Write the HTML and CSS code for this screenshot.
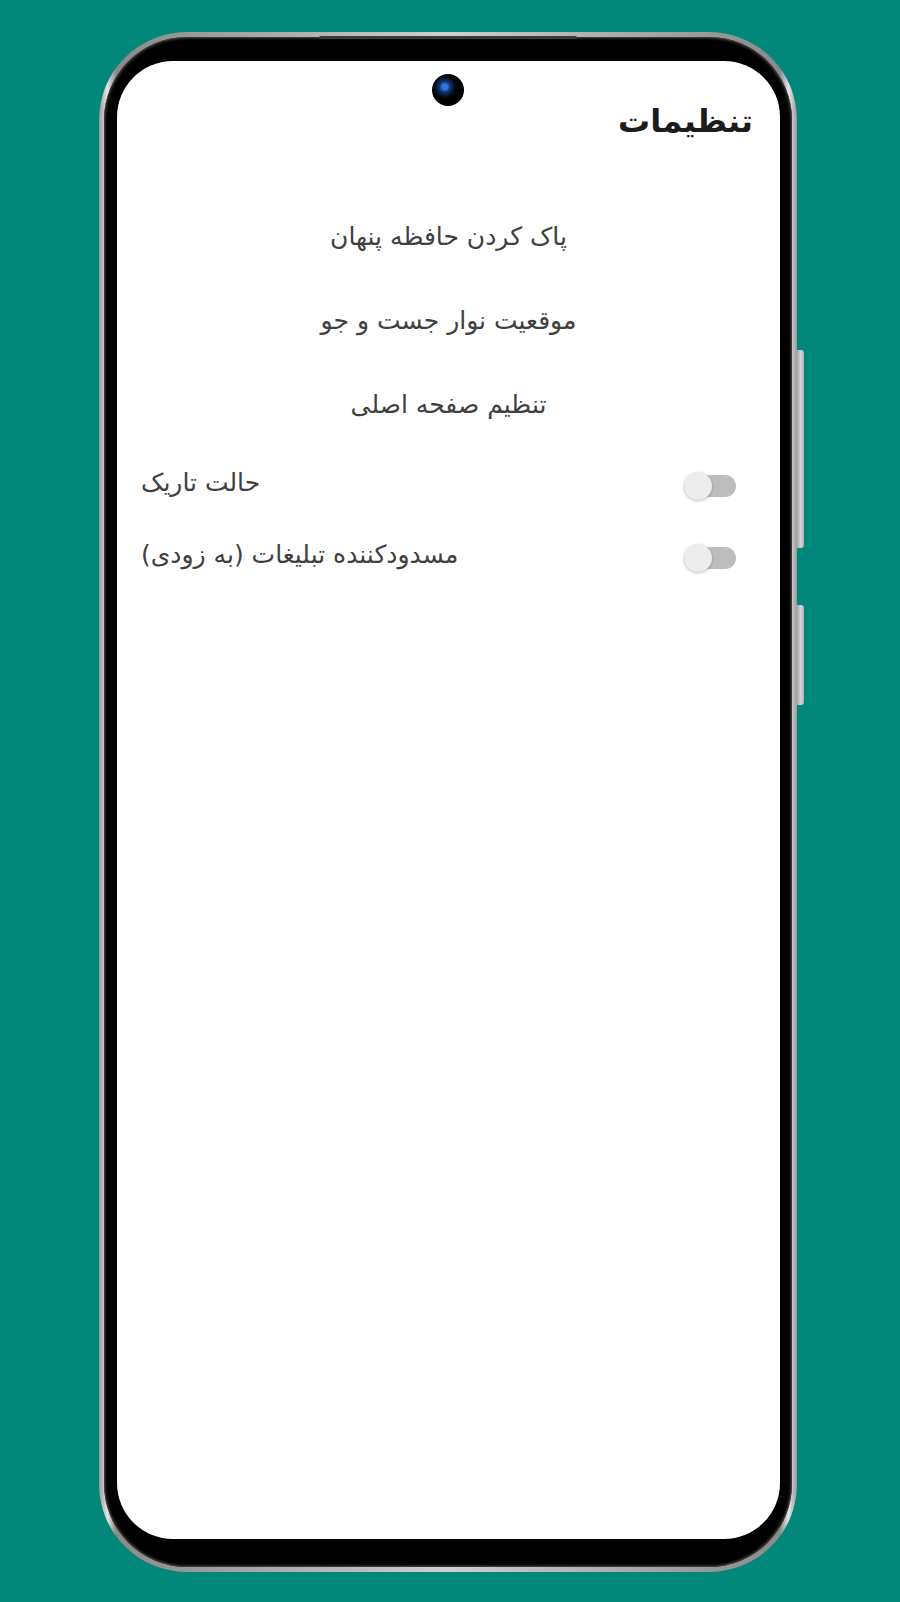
FILE: index.html
```html
<!DOCTYPE html>
<html lang="fa">
<head>
<meta charset="utf-8">
<title>تنظیمات</title>
<link rel="stylesheet" href="styles.css">
</head>
<body>
<div class="phone">
  <span class="side-btn side-btn-1"></span>
  <span class="side-btn side-btn-2"></span>
  <span class="speaker"></span>
  <div class="bezel">
    <div class="screen" dir="rtl">
      <span class="camera"></span>
      <h1 class="title">تنظیمات</h1>
      <ul class="menu">
        <li class="menu-item">پاک کردن حافظه پنهان</li>
        <li class="menu-item">موقعیت نوار جست و جو</li>
        <li class="menu-item">تنظیم صفحه اصلی</li>
      </ul>
      <div class="toggles">
        <div class="toggle-row">
          <span class="switch"><span class="knob"></span></span>
          <span class="toggle-label">حالت تاریک</span>
        </div>
        <div class="toggle-row">
          <span class="switch"><span class="knob"></span></span>
          <span class="toggle-label">مسدودکننده تبلیغات (به زودی)</span>
        </div>
      </div>
    </div>
  </div>
</div>
</body>
</html>
```

FILE: styles.css
```css
html, body {
  margin: 0;
  padding: 0;
}
body {
  background: #01887a;
  width: 900px;
  height: 1602px;
  overflow: hidden;
  font-family: "DejaVu Sans", "Noto Sans", sans-serif;
}
.phone {
  position: relative;
  box-sizing: border-box;
  margin: 32px 0 0 99px;
  width: 698px;
  height: 1540px;
  padding: 5px;
  border-radius: 88px;
  background: linear-gradient(90deg, #9a9a9a 0%, #e6e6e6 1.2%, #8a8a8a 2.4%, #cfcfcf 50%, #8a8a8a 97.6%, #e6e6e6 98.8%, #9a9a9a 100%);
}
.side-btn {
  position: absolute;
  right: -7px;
  width: 8px;
  background: linear-gradient(90deg, #9c9c9c, #d4d4d4 60%, #b0b0b0);
  border-radius: 0 3px 3px 0;
}
.side-btn-1 {
  top: 318px;
  height: 198px;
}
.side-btn-2 {
  top: 573px;
  height: 100px;
}
.speaker {
  position: absolute;
  top: 4px;
  left: 220px;
  width: 258px;
  height: 3px;
  border-radius: 2px;
  background: #3a3a3a;
}
.bezel {
  box-sizing: border-box;
  height: 100%;
  padding: 24px 12px 28px 13px;
  border-radius: 83px;
  background: #000;
  box-shadow: inset 0 0 3px 1px #555;
}
.screen {
  position: relative;
  box-sizing: border-box;
  height: 100%;
  background: #fff;
  border-radius: 56px;
  overflow: hidden;
  padding-top: 36px;
}
.camera {
  position: absolute;
  top: 13px;
  left: 315px;
  width: 32px;
  height: 32px;
  border-radius: 50%;
  background: radial-gradient(circle at 40% 40%, #2f74dc 0 3px, #123a7a 5px, #050b18 10px, #000 13px);
}
.title {
  margin: 0;
  padding-right: 27px;
  font-size: 32px;
  font-weight: bold;
  line-height: 48px;
  color: #1c1c1c;
}
.menu {
  list-style: none;
  margin: 50px 0 0;
  padding: 0;
}
.menu-item {
  text-align: center;
  font-size: 25px;
  line-height: 84px;
  color: #404040;
}
.toggles {
  margin-top: 7px;
  display: flex;
  flex-direction: column;
  gap: 16px;
  padding: 0 44px 0 0;
}
.toggle-row {
  display: flex;
  flex-direction: row;
  align-items: center;
  justify-content: space-between;
  height: 56px;
  padding-left: 24px;
}
.toggle-label {
  font-size: 25px;
  color: #404040;
}
.switch {
  position: relative;
  display: block;
  width: 52px;
  height: 22px;
  margin-top: 8px;
  border-radius: 11px;
  background: #bdbdbd;
}
.knob {
  position: absolute;
  top: -3px;
  right: 24px;
  width: 28px;
  height: 28px;
  border-radius: 50%;
  background: #ececec;
  box-shadow: 0 1px 3px rgba(0,0,0,0.25);
}
```
